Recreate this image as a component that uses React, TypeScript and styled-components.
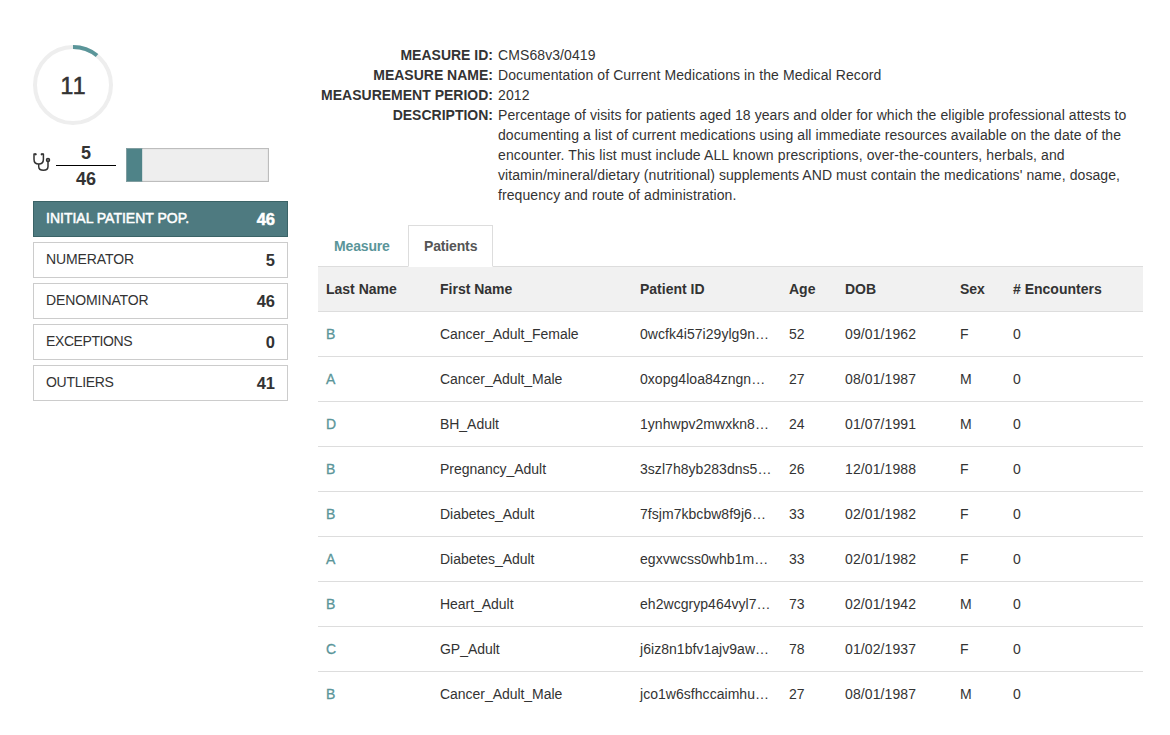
import React from "react";
import styled, { createGlobalStyle } from "styled-components";

const GlobalStyle = createGlobalStyle`
  *, *::before, *::after { box-sizing: border-box; }
  body {
    margin: 0;
    background: #fff;
    color: #333;
    font-family: "Helvetica Neue", "Liberation Sans", Arial, sans-serif;
    font-size: 14px;
    line-height: 20px;
  }
`;

const Page = styled.main`
  display: flex;
  gap: 30px;
  padding: 45px 27px 0 33px;
`;

const Sidebar = styled.aside`
  width: 255px;
  flex: none;
`;

const Content = styled.section`
  flex: 1;
  min-width: 0;
`;

const Dial = styled.div`
  display: grid;
  width: 80px;
  height: 80px;
  > * { grid-area: 1 / 1; }
`;

const DialValue = styled.span`
  place-self: center;
  font-size: 23px;
  line-height: 26px;
  letter-spacing: 1px;
  padding: 1px 0 0 1px;
  -webkit-text-stroke: 0.6px #333;
`;

const Score = styled.div`
  display: flex;
  align-items: flex-start;
  height: 53px;
  margin: 15px 0 8px;
  padding-top: 2px;
`;

const IconSlot = styled.span`
  width: 23px;
  padding-top: 11px;
  line-height: 0;
`;

const Fraction = styled.div`
  width: 60px;
  margin-right: 10px;
  text-align: center;
  font-size: 18px;
  font-weight: bold;
  line-height: 26px;
`;

const Numerator = styled.div`
  height: 24px;
  line-height: 22px;
  border-bottom: 1px solid #000;
`;

const Meter = styled.div`
  width: 143px;
  height: 34px;
  margin-top: 6px;
  border: 1px solid #bdbdbd;
  background: #eee;
  box-shadow: inset 0 0 1px #bbb;
`;

const MeterFill = styled.div`
  height: 100%;
  background: #4f8388;
  box-shadow: 0 0 0 1px rgba(79, 131, 136, 0.55);
  clip-path: inset(-1px 0 -1px -1px);
`;

const Populations = styled.div`
  display: flex;
  flex-direction: column;
  gap: 5px;
`;

const Population = styled.button<{ $active?: boolean; $tracking: number }>`
  display: flex;
  justify-content: space-between;
  height: 36px;
  padding: 6px 12px;
  border: 1px solid ${(p) => (p.$active ? "#3b6367" : "#ccc")};
  background: ${(p) => (p.$active ? "#4e7a80" : "#fff")};
  color: ${(p) => (p.$active ? "#fff" : "#333")};
  font: inherit;
  line-height: 20px;
  letter-spacing: ${(p) => p.$tracking}px;
  text-align: left;
  -webkit-text-stroke: ${(p) => (p.$active ? "0.5px #fff" : "0")};
`;

const Count = styled.strong`
  font-size: 16.5px;
  line-height: 22px;
  letter-spacing: 0;
`;

const Details = styled.dl`
  display: grid;
  grid-template-columns: 175px 1fr;
  column-gap: 5px;
  margin: 0 0 20px;
`;

const Term = styled.dt`
  text-align: right;
  font-weight: bold;
`;

const Description = styled.dd`
  margin: 0;
  letter-spacing: 0.09px;
`;

const Line = styled.span<{ $tracking: number }>`
  display: block;
  white-space: nowrap;
  letter-spacing: ${(p) => p.$tracking}px;
`;

const Tabs = styled.nav`
  display: flex;
  height: 42px;
  border-bottom: 1px solid #ddd;
`;

const Tab = styled.a<{ $active?: boolean }>`
  height: 42px;
  padding: 10px 15px;
  border: 1px solid ${(p) => (p.$active ? "#ddd" : "transparent")};
  border-bottom-color: ${(p) => (p.$active ? "#fff" : "transparent")};
  background: ${(p) => (p.$active ? "#fff" : "transparent")};
  color: ${(p) => (p.$active ? "#555" : "#5a9599")};
  font-weight: bold;
  letter-spacing: -0.15px;
  width: ${(p) => (p.$active ? 85 : 90)}px;
  white-space: nowrap;
`;

const Table = styled.table`
  width: 825px;
  table-layout: fixed;
  border-collapse: separate;
  border-spacing: 0;
`;

const HeadCell = styled.th<{ $width: number }>`
  width: ${(p) => p.$width}px;
  height: 45px;
  padding: 0 8px;
  border-bottom: 1px solid #ddd;
  background: #f1f1f1;
  text-align: left;
  white-space: nowrap;
`;

const Cell = styled.td<{ $tracking?: number }>`
  height: 45px;
  padding: 0 8px;
  border-bottom: 1px solid #ddd;
  letter-spacing: ${(p) => p.$tracking ?? 0}px;
  white-space: nowrap;
  tr:last-child > & { border-bottom-color: transparent; }
`;

const PatientLink = styled.a`
  color: #5a9599;
  -webkit-text-stroke: 0.3px #5a9599;
`;

const populations: [string, number, number][] = [
  ["INITIAL PATIENT POP.", 46, 0],
  ["NUMERATOR", 5, -0.1],
  ["DENOMINATOR", 46, -0.1],
  ["EXCEPTIONS", 0, -0.4],
  ["OUTLIERS", 41, -0.3],
];

// Each line of the description with its letter spacing.
const description: [string, number][] = [
  ["Percentage of visits for patients aged 18 years and older for which the eligible professional attests to", 0.07],
  ["documenting a list of current medications using all immediate resources available on the date of the", 0.075],
  ["encounter. This list must include ALL known prescriptions, over-the-counters, herbals, and", 0.115],
  ["vitamin/mineral/dietary (nutritional) supplements AND must contain the medications' name, dosage,", 0.08],
  ["frequency and route of administration.", 0.09],
];

const columns: [string, number][] = [
  ["Last Name", 114],
  ["First Name", 200],
  ["Patient ID", 149],
  ["Age", 56],
  ["DOB", 115],
  ["Sex", 53],
  ["# Encounters", 138],
];

// Letter spacing of the cells after the last name, in column order.
const tracking = [-0.04, 0.04, 0, 0.1, 0, 0];

const patients = [
  ["B", "Cancer_Adult_Female", "0wcfk4i57i29ylg9n…", "52", "09/01/1962", "F", "0"],
  ["A", "Cancer_Adult_Male", "0xopg4loa84zngn…", "27", "08/01/1987", "M", "0"],
  ["D", "BH_Adult", "1ynhwpv2mwxkn8…", "24", "01/07/1991", "M", "0"],
  ["B", "Pregnancy_Adult", "3szl7h8yb283dns5…", "26", "12/01/1988", "F", "0"],
  ["B", "Diabetes_Adult", "7fsjm7kbcbw8f9j6…", "33", "02/01/1982", "F", "0"],
  ["A", "Diabetes_Adult", "egxvwcss0whb1m…", "33", "02/01/1982", "F", "0"],
  ["B", "Heart_Adult", "eh2wcgryp464vyl7…", "73", "02/01/1942", "M", "0"],
  ["C", "GP_Adult", "j6iz8n1bfv1ajv9aw…", "78", "01/02/1937", "F", "0"],
  ["B", "Cancer_Adult_Male", "jco1w6sfhccaimhu…", "27", "08/01/1987", "M", "0"],
];

function Stethoscope() {
  return (
    <svg width="18" height="19" viewBox="0 0 18 19" fill="none" stroke="#333" strokeWidth="1.5">
      <path d="M2.8 1.1H1V6.2C1 9.2 3 11 5.7 11S10.4 9.2 10.4 6.2V1.1H8.6" strokeLinejoin="round" />
      <path d="M5.7 11V13.4C5.7 16 7.9 17.2 10.4 17.2S15 16 15 13.4V8.6" />
      <circle cx="2.7" cy="1.3" r="1.1" fill="#333" stroke="none" />
      <circle cx="8.7" cy="1.3" r="1.1" fill="#333" stroke="none" />
      <circle cx="15" cy="7" r="1.5" fill="#aaa" />
    </svg>
  );
}

export default function App() {
  return (
    <>
      <GlobalStyle />
      <Page>
        <Sidebar>
          <Dial>
            <svg width="80" height="80" viewBox="0 0 80 80" fill="none" strokeWidth="4">
              <circle cx="40" cy="40" r="38" stroke="#eee" />
              <path d="M40 2A38 38 0 0 1 64 10.5" stroke="#5a9599" />
            </svg>
            <DialValue>11</DialValue>
          </Dial>
          <Score>
            <IconSlot>
              <Stethoscope />
            </IconSlot>
            <Fraction>
              <Numerator>5</Numerator>
              <div>46</div>
            </Fraction>
            <Meter>
              <MeterFill style={{ width: `${(5 / 46) * 100}%` }} />
            </Meter>
          </Score>
          <Populations>
            {populations.map(([name, count, spacing], i) => (
              <Population key={name} $active={i === 0} $tracking={spacing}>
                <span>{name}</span>
                <Count>{count}</Count>
              </Population>
            ))}
          </Populations>
        </Sidebar>
        <Content>
          <Details>
            <Term>MEASURE ID:</Term>
            <Description>CMS68v3/0419</Description>
            <Term>MEASURE NAME:</Term>
            <Description>Documentation of Current Medications in the Medical Record</Description>
            <Term>MEASUREMENT PERIOD:</Term>
            <Description>2012</Description>
            <Term>DESCRIPTION:</Term>
            <Description>
              {description.map(([text, spacing]) => (
                <Line key={text} $tracking={spacing}>{text}</Line>
              ))}
            </Description>
          </Details>
          <Tabs>
            <Tab>Measure</Tab>
            <Tab $active>Patients</Tab>
          </Tabs>
          <Table>
            <thead>
              <tr>
                {columns.map(([label, width]) => (
                  <HeadCell key={label} $width={width}>{label}</HeadCell>
                ))}
              </tr>
            </thead>
            <tbody>
              {patients.map(([last, ...rest]) => (
                <tr key={rest[1]}>
                  <Cell><PatientLink>{last}</PatientLink></Cell>
                  {rest.map((value, i) => (
                    <Cell key={i} $tracking={tracking[i]}>{value}</Cell>
                  ))}
                </tr>
              ))}
            </tbody>
          </Table>
        </Content>
      </Page>
    </>
  );
}
